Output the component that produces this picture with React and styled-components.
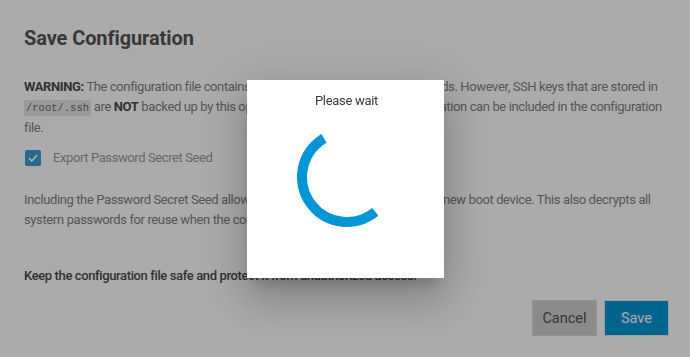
import React from "react";
import styled, { createGlobalStyle } from "styled-components";

const GlobalStyle = createGlobalStyle`
  html, body {
    margin: 0;
    padding: 0;
    background: #ffffff;
    font-family: Roboto, "Liberation Sans", sans-serif;
  }
`;

const Page = styled.div`
  width: 690px;
  height: 357px;
  box-sizing: border-box;
  padding: 26px 22px 0 24px;
  background: #ffffff;
`;

const Title = styled.h2`
  margin: 0;
  font-family: Roboto, sans-serif;
  font-size: 20px;
  line-height: 24px;
  font-weight: 700;
  color: #545454;
  letter-spacing: -0.1px;
`;

const Paragraph = styled.p`
  margin: ${(p) => p.$top || 0}px 0 0 0;
  font-size: 13px;
  line-height: 20px;
  letter-spacing: -0.38px;
  color: #808080;
  font-weight: ${(p) => (p.$strong ? 500 : 400)};
  ${(p) => p.$strong && "color: #4c4c4c;"}
`;

const Bold = styled.b`
  font-weight: 700;
  color: #4a4a4a;
`;

const Code = styled.code`
  font-family: "Liberation Mono", monospace;
  font-size: 10.5px;
  letter-spacing: 0;
  background: #e6e6e6;
  color: #6a6a6a;
  padding: 2px 2px;
`;

const CheckRow = styled.label`
  display: flex;
  align-items: center;
  gap: 12px;
  height: 20px;
  margin: 10px 0 0 1px;
`;

const Box = styled.span`
  width: 16px;
  height: 16px;
  border-radius: 2px;
  background: #3d9fd6;
  display: flex;
  align-items: center;
  justify-content: center;
`;

const CheckLabel = styled.span`
  font-size: 13px;
  line-height: 20px;
  letter-spacing: -0.4px;
  color: #9a9a9a;
`;

const Actions = styled.div`
  display: flex;
  justify-content: flex-end;
  gap: 7px;
  margin-top: 14px;
  margin-right: -1px;
`;

const Button = styled.button`
  width: 65px;
  height: 36px;
  border: 1px solid ${(p) => (p.$primary ? "#f0e8dc" : "#dddddd")};
  background: ${(p) => (p.$primary ? "#0096d6" : "#cfcfcf")};
  color: ${(p) => (p.$primary ? "#ffffff" : "#4f4f4f")};
  font-family: Roboto, sans-serif;
  font-size: 14.5px;
  font-weight: 400;
  padding: 0;
`;

const Backdrop = styled.div`
  position: fixed;
  inset: 0;
  background: rgba(0, 0, 0, 0.33);
  display: flex;
  align-items: center;
  justify-content: center;
`;

const Dialog = styled.div`
  width: 197px;
  height: 198px;
  box-sizing: border-box;
  background: #ffffff;
  display: flex;
  flex-direction: column;
  align-items: center;
  padding-top: 13px;
  margin-left: 1px;
  box-shadow: 0 11px 15px -7px rgba(0, 0, 0, 0.2),
    0 24px 38px 3px rgba(0, 0, 0, 0.14), 0 9px 46px 8px rgba(0, 0, 0, 0.12);
`;

const DialogTitle = styled.div`
  font-size: 13px;
  line-height: 16px;
  letter-spacing: -0.3px;
  color: #3a3a3a;
  margin-left: 2px;
`;

const Spinner = styled.svg`
  width: 100px;
  height: 100px;
  margin-top: 18px;
  margin-left: 2px;
`;

function LoadingSpinner() {
  const c = 2 * Math.PI * 45;
  const len = (188 / 360) * c;
  return (
    <Spinner viewBox="0 0 100 100">
      <circle
        cx="50"
        cy="50"
        r="45"
        fill="none"
        stroke="#0095d5"
        strokeWidth="10"
        strokeDasharray={`${len} ${c}`}
        transform="rotate(51 50 50)"
      />
    </Spinner>
  );
}

export default function App() {
  return (
    <>
      <GlobalStyle />
      <Page>
        <Title>Save Configuration</Title>
        <Paragraph $top={27}>
          <Bold>WARNING:</Bold> The configuration file contains sensitive data
          like system passwords. However, SSH keys that are stored in{" "}
          <Code>/root/.ssh</Code> are <Bold>NOT</Bold> backed up by this
          operation. Additional sensitive information can be included in the
          configuration file.
        </Paragraph>
        <CheckRow>
          <Box>
            <svg width="12" height="12" viewBox="0 0 12 12">
              <path d="M2 6.2 L4.8 9 L10 3" fill="none" stroke="#ffffff" strokeWidth="1.8" />
            </svg>
          </Box>
          <CheckLabel>Export Password Secret Seed</CheckLabel>
        </CheckRow>
        <Paragraph $top={22}>
          Including the Password Secret Seed allows using this configuration
          file with a new boot device. This also decrypts all system passwords
          for reuse when the configuration file is uploaded.
        </Paragraph>
        <Paragraph $top={36} $strong>
          Keep the configuration file safe and protect it from unauthorized
          access.
        </Paragraph>
        <Actions>
          <Button>Cancel</Button>
          <Button $primary>Save</Button>
        </Actions>
      </Page>
      <Backdrop>
        <Dialog>
          <DialogTitle>Please wait</DialogTitle>
          <LoadingSpinner />
        </Dialog>
      </Backdrop>
    </>
  );
}
